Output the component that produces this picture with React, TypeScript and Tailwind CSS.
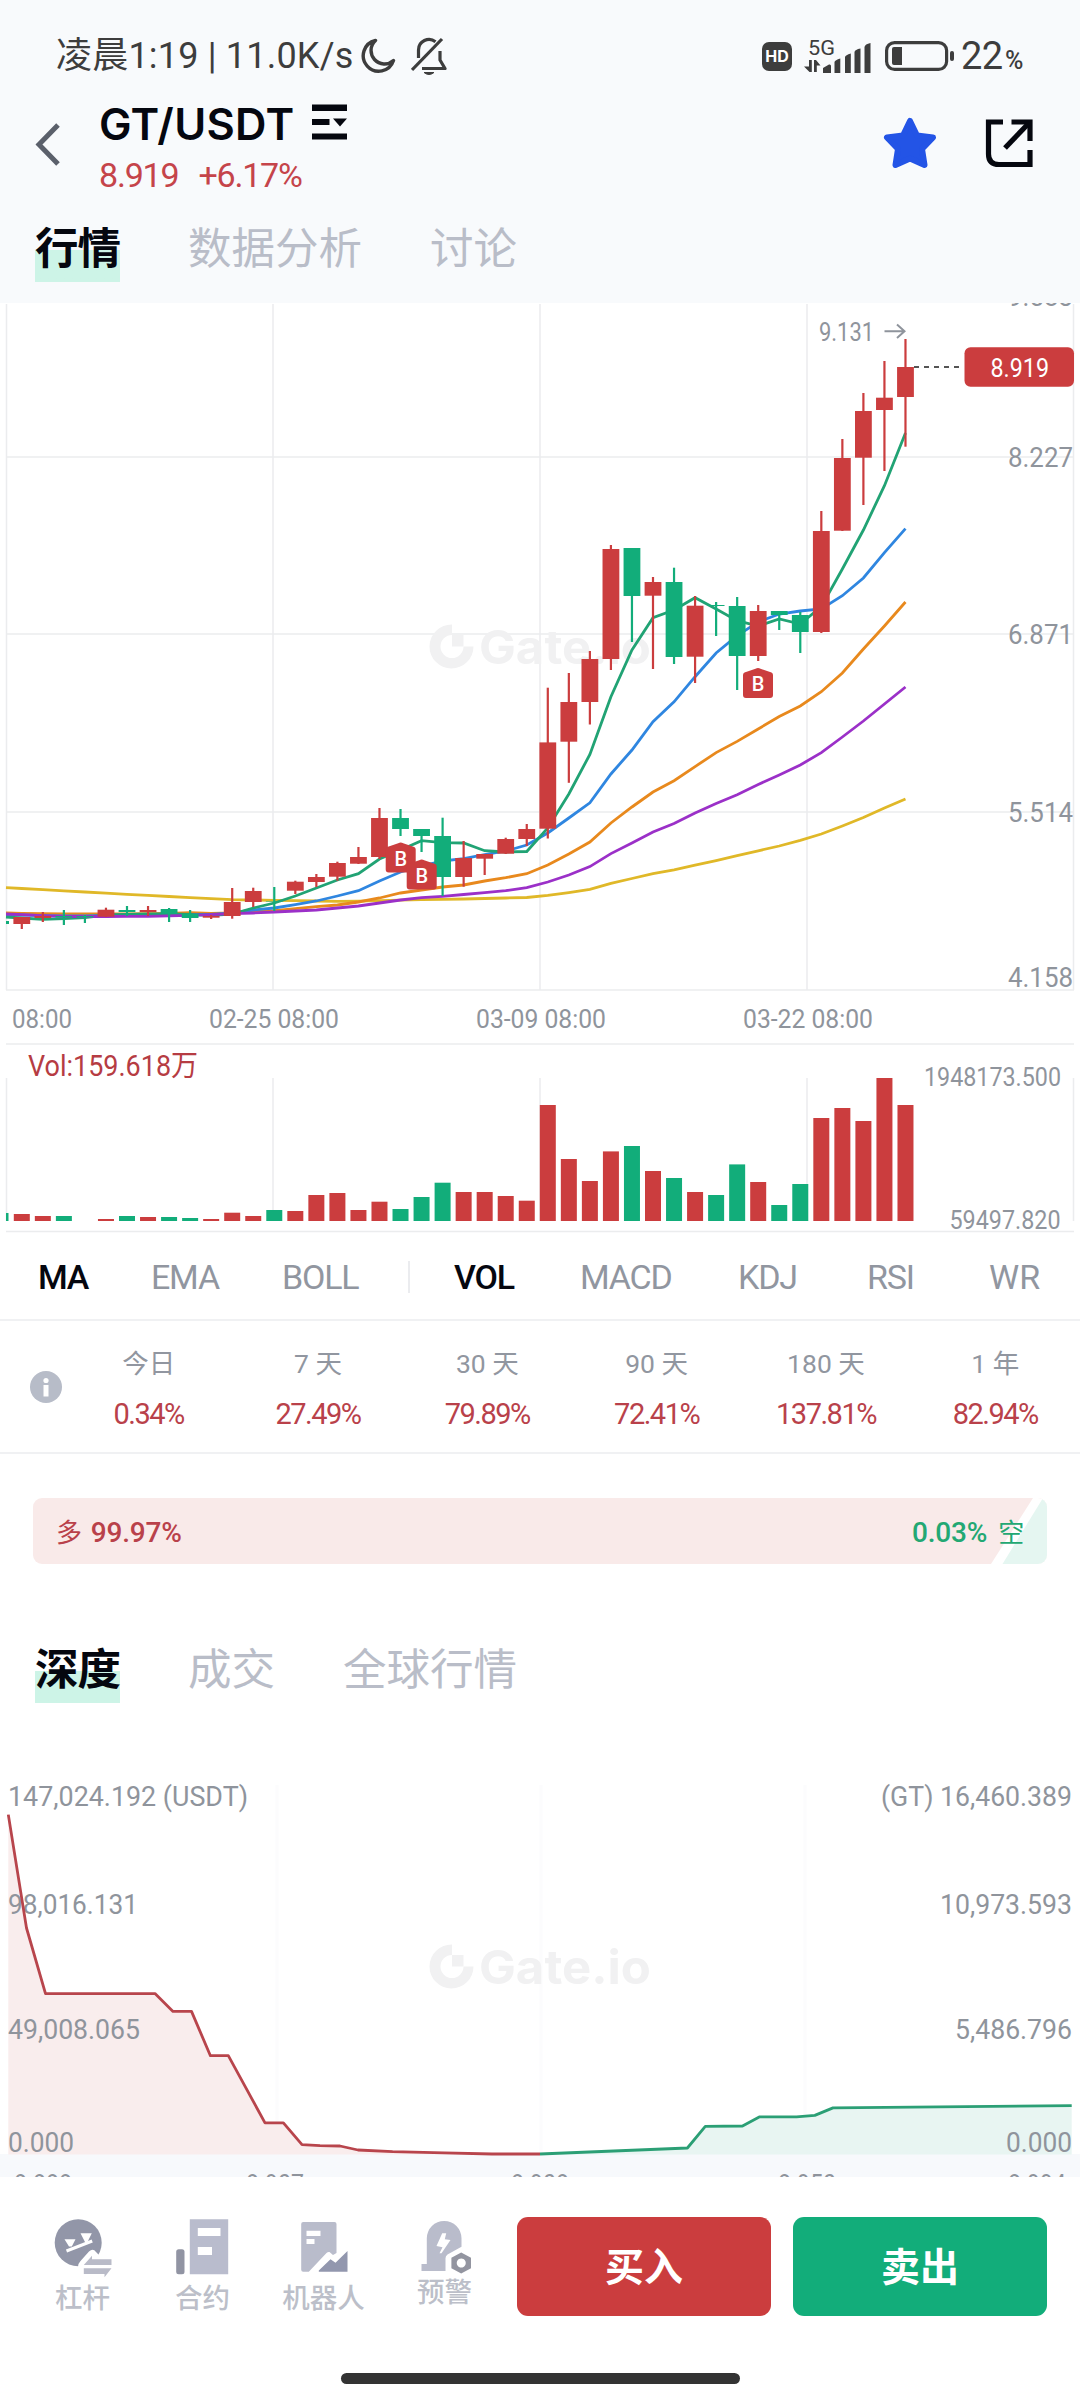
import { useState } from 'react';
import type { ReactNode } from 'react';

const RED = '#cb3d3e';
const GREEN = '#12ad7a';
const LABEL = '#8f949c';

// Candle centers are evenly spaced across the plot
const STEP = 21.04;
const candleX = (i: number) => 21.8 + i * STEP;

type Candle = [up: 0 | 1, high: number, top: number, bottom: number, low: number, vol: number];

// up = 1 is drawn red (rise), 0 is drawn green (fall)
const candles: Candle[] = [
  [1, 917, 917, 924, 929, 1214],
  [1, 912, 916, 918, 922, 1216],
  [0, 910, 916, 917.5, 925, 1216],
  [0, 915, 916, 917.5, 923, 1221],
  [1, 907.7, 909.7, 916.7, 917, 1219],
  [0, 906, 910, 912, 916, 1216],
  [1, 906, 910, 912, 916, 1217],
  [0, 908, 909, 914, 922, 1217],
  [0, 910, 914, 918, 922, 1218],
  [1, 915, 916, 917.7, 919, 1219],
  [1, 888, 902, 916, 918.7, 1212.7],
  [1, 887.7, 891, 902, 907, 1216],
  [0, 887, 901.5, 902, 911, 1210],
  [1, 880.7, 881.7, 890.7, 894, 1211],
  [1, 874, 877, 882, 887, 1195],
  [1, 861.7, 863, 876.7, 880.7, 1193],
  [1, 847, 857, 863.7, 864, 1210],
  [1, 808, 818, 857, 859, 1201.7],
  [0, 809, 818, 829, 836, 1209],
  [0, 829, 829, 836, 852, 1197],
  [0, 817.7, 836, 877, 896, 1182.7],
  [1, 841, 858, 877, 886.7, 1192],
  [1, 854, 854, 858.7, 875, 1192],
  [1, 837.7, 839, 853.7, 854, 1196],
  [1, 824, 829, 839, 846, 1200.7],
  [1, 687.7, 742.4, 828.7, 838.5, 1105],
  [1, 673, 702, 741.7, 782.8, 1159],
  [1, 651, 659, 702, 724.5, 1181],
  [1, 545, 549, 659, 670, 1151.4],
  [0, 548, 548, 596, 642, 1146],
  [1, 577, 582, 595.7, 669, 1171],
  [0, 567.7, 582, 657, 664, 1178],
  [1, 596, 605.7, 656.7, 683, 1192],
  [0, 602, 605, 606, 636, 1195],
  [0, 597, 606, 656, 690, 1164.4],
  [1, 605, 611, 656, 661, 1182],
  [0, 611, 611, 615, 630, 1205],
  [0, 612, 615, 632, 653, 1184],
  [1, 511, 531, 632, 633, 1118],
  [1, 439, 458, 530.7, 531, 1108],
  [1, 393, 411, 457.7, 505, 1121],
  [1, 361, 397.7, 410, 471, 1078],
  [1, 339, 367, 397, 446.7, 1105],
];

// Moving averages, one value per candle
const averages = [
  {
    color: '#e0b828',
    start: 887.7,
    values: [888.5, 889.7, 890.8, 892, 893.2, 894.3, 895.4, 896.5, 897.6, 898.7, 899.7, 900, 900.4, 900.7, 901, 901.3, 901.2, 900.7, 900.2, 899.7, 899.4, 899, 898.5, 898, 897.5, 895.4, 892.6, 889.4, 883.4, 878.5, 873.6, 869.8, 865.2, 860.6, 855.7, 850.8, 846, 840.3, 834, 826, 817.5, 808, 799],
  },
  {
    color: '#e8891d',
    start: 913,
    values: [913.3, 913.6, 914, 914, 914, 914, 913.7, 913.3, 912.7, 913.3, 913, 911.7, 910.7, 908.7, 906.7, 905, 902, 898, 893, 890, 887, 885, 881, 877.7, 873.7, 865, 854, 842, 823, 807, 792, 780.7, 766.6, 752.6, 741.4, 729, 716.5, 706, 691.7, 673, 649, 626, 602],
  },
  {
    color: '#2f86e0',
    start: 914.7,
    values: [915, 915.7, 916, 916, 915.5, 915, 915, 914.8, 914.5, 914.3, 913, 910, 908, 904.7, 901, 896, 890.7, 881, 872, 866, 861, 858.7, 854.7, 851, 845, 833, 818, 802.8, 774, 750, 721.7, 701.8, 676.7, 653, 635.7, 622, 614, 611, 609, 595.7, 578, 552.7, 528.7],
  },
  {
    color: '#21a374',
    start: 917,
    values: [918, 919.3, 918.7, 917.7, 915, 914.5, 914, 914, 914.5, 915.3, 914, 908, 903, 896, 888, 880, 873.7, 859, 850, 840.7, 842.7, 843, 850.7, 852, 851.5, 828, 794, 754.4, 696.7, 650, 617.7, 610, 597.7, 609, 620.7, 626, 619, 624, 606.7, 569, 530, 485.7, 433],
  },
  {
    color: '#9b30c8',
    start: 914,
    values: [914.7, 915.7, 916.3, 916.5, 916.5, 916.4, 916.3, 915.8, 915.3, 914.7, 913.7, 913, 912, 911, 910, 908, 906, 903, 900, 897.7, 896.3, 894.5, 892.7, 890.7, 887.7, 882, 875, 866.6, 853.6, 843, 832, 823.5, 813, 803.5, 794.7, 784.5, 775, 765, 752.6, 737, 721, 704, 687],
  },
];

const marketTabs = ['行情', '数据分析', '讨论'];
const depthTabs = ['深度', '成交', '全球行情'];

const periods = [
  { label: '今日', value: '0.34%' },
  { label: '7 天', value: '27.49%' },
  { label: '30 天', value: '79.89%' },
  { label: '90 天', value: '72.41%' },
  { label: '180 天', value: '137.81%' },
  { label: '1 年', value: '82.94%' },
];

interface ChartTextProps {
  x: number;
  y: number;
  width: number;
  size?: number;
  fill?: string;
  children: string;
}

// Axis text squeezed to the width of the condensed numerals
function ChartText({ x, y, width, size = 28, fill = LABEL, children }: ChartTextProps) {
  return (
    <text x={x} y={y} fontSize={size} fill={fill} textLength={width} lengthAdjust="spacingAndGlyphs">
      {children}
    </text>
  );
}

function Watermark({ y }: { y: number }) {
  return (
    <g transform={`translate(430 ${y})`} fill="#f1f1f2">
      <path d="M22 0.5A22 22 0 1 0 43.500 22.500H33.500A11.500 11.500 0 1 1 22 11Z" />
      <path d="M22 11h11.500v11.500H22z" />
      <text x={49} y={40} fontSize={47} fontWeight={700} fontFamily="Inter, sans-serif" textLength={172} lengthAdjust="spacingAndGlyphs">
        Gate.io
      </text>
    </g>
  );
}

function BuyMark({ x, y }: { x: number; y: number }) {
  return (
    <g transform={`translate(${x} ${y})`}>
      <path d="M-2.500 0.700Q0 -0.600 2.500 0.700L13.500 4.500Q15 5 15 7V27Q15 30 12 30H-12Q-15 30 -15 27V7Q-15 5 -13.500 4.500Z" fill={RED} />
      <text x={0} y={23} fontSize={20} fontWeight={500} fill="#fff" textAnchor="middle">B</text>
    </g>
  );
}

function StatusBar() {
  return (
    <div className="flex h-[96px] shrink-0 items-start justify-between pl-[56px] pr-[55px] pt-[32px] text-[#3d3d3d]">
      <div className="flex h-[48px] items-center">
        <span className="w-[297px] whitespace-pre text-[36px] leading-[48px] tracking-[0.2px]">凌晨1:19 | 11.0K/s</span>
        <svg className="ml-[7px] h-[36px] w-[36px]" viewBox="0 0 36 36" fill="none" stroke="currentColor" strokeWidth="3.400" strokeLinejoin="round">
          <path d="M15.500 2.500A15.500 15.500 0 1 0 33.500 22.500A13 13 0 0 1 15.500 2.500Z" />
        </svg>
        <svg className="ml-[15px] h-[38px] w-[36px]" viewBox="0 0 36 38" fill="none" stroke="currentColor" strokeWidth="3.200" strokeLinejoin="round">
          <path d="M1 33L31 2" />
          <path d="M7.500 21V13A10.500 10.500 0 0 1 24.500 4.700" />
          <path d="M29 14V23L34 31.500H11" />
          <path d="M13 35.500H23Q18 39.500 13 35.500Z" fill="currentColor" strokeWidth="1" />
        </svg>
      </div>

      <div className="flex h-[48px] items-center">
        <div className="flex h-[29px] w-[30px] items-center justify-center rounded-[7px] bg-[#3d3d3d] font-[Inter] text-[16px] font-bold text-white">HD</div>
        <svg className="ml-[12px] h-[36px] w-[68px]" viewBox="0 0 68 36" fill="#3d3d3d">
          <text x="4" y="17" fontSize="20" textLength="27" lengthAdjust="spacingAndGlyphs">5G</text>
          <path d="M5 22h2.800v12H5.500L0 28.500H5zM10 34V22h2L16.500 27.500H12.800V34z" />
          <path d="M19 35V30L25 26.500Q27 26 27 28V35z" />
          <path d="M30.500 35V24Q31 22 36.300 20.500V35z" />
          <path d="M41 35V19Q41.500 17 46.800 15.500V35z" />
          <path d="M50.500 35V14Q51 11.500 56.500 10.500V35z" />
          <path d="M60.500 35V9Q61 6 66.500 5V35z" />
        </svg>
        <svg className="ml-[13px] h-[30px] w-[70px]" viewBox="0 0 70 30">
          <rect x="1.600" y="1.600" width="60" height="26.800" rx="8" fill="none" stroke="#3d3d3d" strokeWidth="3.200" />
          <path d="M9 6h8v18h-8q-2 0-2-2v-14q0-2 2-2z" fill="#3d3d3d" />
          <rect x="65" y="10" width="4" height="10" rx="2" fill="#3d3d3d" />
        </svg>
        <span className="ml-[6px] w-[44px] text-[38px] leading-[48px] tracking-[-0.5px]">22</span>
        <span className="w-[20px] pt-[9px] text-[25px] font-medium tracking-[-1px]">%</span>
      </div>
    </div>
  );
}

function Header() {
  return (
    <header className="flex h-[106px] shrink-0 items-start pl-[35px] pr-[47px]">
      <svg className="mt-[27px] h-[43px] w-[26px]" viewBox="0 0 26 43" fill="none" stroke="#5b606b" strokeWidth="5">
        <path d="M23 2L4 21.500L23 41" />
      </svg>
      <div className="ml-[38px] flex flex-col">
        <div className="flex h-[56px] items-center">
          <h1 className="w-[213px] font-[Inter] text-[43.500px] font-semibold leading-[56px] tracking-[0.300px] text-[#05070f]">GT/USDT</h1>
          <svg className="-mt-[4px] h-[36px] w-[35px]" viewBox="0 0 35 36" fill="#05070f">
            <path d="M0 0.500h35v6.500H0zM0 15h17.500v6H0zM21 14.500h14L28 22.500zM0 29.500h35v6H0z" />
          </svg>
        </div>
        <div className="flex gap-[20px] text-[34px] leading-[46px] tracking-[-1.2px] text-[#c5444a]">
          <span>8.919</span>
          <span>+6.17%</span>
        </div>
      </div>
      <svg className="ml-auto mt-[21px] h-[52px] w-[54px]" viewBox="0 0 54 52" fill="#2354e6" stroke="#2354e6" strokeWidth="6" strokeLinejoin="round">
        <path d="M27 4L34 18.500L50 20.500L39 32L41.500 48L27 41.500L12.500 48L15 32L4 20.500L20 18.500Z" />
      </svg>
      <svg className="ml-[48px] mt-[23px] h-[49px] w-[48px]" viewBox="0 0 48 49" fill="none" stroke="#05070f" strokeWidth="5.200">
        <path d="M18 3H3.500V35Q3.500 45.500 14 45.500H45V31" />
        <path d="M26.500 3H45V22" />
        <path d="M43 5L20 29" />
      </svg>
    </header>
  );
}

interface TabsProps {
  items: string[];
  active: string;
  onSelect: (item: string) => void;
  className: string;
}

function Tabs({ items, active, onSelect, className }: TabsProps) {
  return (
    <nav className={`flex items-start gap-[68px] pl-[35px] text-[43.500px] leading-[64px] ${className}`}>
      {items.map((item) => (
        <button key={item} onClick={() => onSelect(item)} className="flex items-start">
          <span
            className={
              item === active
                ? 'bg-linear-to-t from-[#cdf4e7] from-50% to-transparent to-50% font-bold tracking-[-1px] text-[#05070f]'
                : 'text-[#b9bdc8]'
            }
          >
            {item}
          </span>
        </button>
      ))}
    </nav>
  );
}

function PriceChart() {
  return (
    <svg className="block h-[930px] w-[1080px] shrink-0 bg-white" viewBox="0 303 1080 930">
      {/* Grid */}
      <g stroke="#ebecee" strokeWidth={1.5}>
        {[6.5, 273, 540, 807, 1073.5].map((x) => (
          <path key={x} d={`M${x} 304V990M${x} 1078V1221`} />
        ))}
        {[457, 634, 812, 990, 1044, 1231.5].map((y) => (
          <path key={y} d={`M6 ${y}H1074`} />
        ))}
      </g>

      <Watermark y={624} />

      {/* Moving averages */}
      {averages.map((line) => (
        <polyline
          key={line.color}
          points={[`6,${line.start}`, ...line.values.map((v, i) => `${candleX(i)},${v}`)].join(' ')}
          fill="none"
          stroke={line.color}
          strokeWidth={2.8}
        />
      ))}

      {/* Candles and volume */}
      <rect x={6} y={921} width={3} height={3} fill={GREEN} />
      <rect x={6} y={1213} width={2.5} height={8} fill={GREEN} />
      {candles.map(([up, high, top, bottom, low, vol], i) => {
        const x = candleX(i);
        return (
          <g key={i} fill={up ? RED : GREEN}>
            <rect x={x - 1.1} y={high} width={2.2} height={low - high} />
            <rect x={x - 8.4} y={top} width={16.8} height={bottom - top} />
            <rect x={x - 8} y={vol} width={16} height={1221 - vol} />
          </g>
        );
      })}

      <BuyMark x={400.7} y={842.5} />
      <BuyMark x={421.7} y={859.5} />
      <BuyMark x={758} y={668} />

      {/* High marker and last price */}
      <ChartText x={819} y={340.5} width={55} size={25}>9.131</ChartText>
      <path d="M884.500 331.300H904M897 324.500L904.500 331.300L897 338" fill="none" stroke={LABEL} strokeWidth={2} />
      <path d="M914 367H964" stroke="#555" strokeWidth={1.8} strokeDasharray="5 5" />
      <rect x={964.5} y={347.3} width={109.5} height={39.5} rx={6} fill={RED} />
      <ChartText x={990.5} y={377} width={58.5} size={25} fill="#fff">8.919</ChartText>

      {/* Axis labels */}
      <ChartText x={1008} y={305.5} width={65}>9.583</ChartText>
      <ChartText x={1008} y={467} width={65}>8.227</ChartText>
      <ChartText x={1008} y={644} width={65}>6.871</ChartText>
      <ChartText x={1008} y={821.5} width={65}>5.514</ChartText>
      <ChartText x={1008} y={986.5} width={65}>4.158</ChartText>
      <ChartText x={12} y={1027.5} width={60} size={25}>08:00</ChartText>
      <ChartText x={209} y={1027.5} width={130} size={25}>02-25 08:00</ChartText>
      <ChartText x={476} y={1027.5} width={130} size={25}>03-09 08:00</ChartText>
      <ChartText x={743} y={1027.5} width={130} size={25}>03-22 08:00</ChartText>
      <ChartText x={28} y={1075.5} width={170} size={29} fill="#b63c43">Vol:159.618万</ChartText>
      <ChartText x={924} y={1085.8} width={137} size={25}>1948173.500</ChartText>
      <ChartText x={949.5} y={1228.5} width={111} size={25}>59497.820</ChartText>
    </svg>
  );
}

function IndicatorRow() {
  return (
    <div className="grid h-[88px] shrink-0 grid-cols-[113px_131px_124px_48px_126px_158px_129px_122px_auto] items-center border-b-2 border-[#f0f1f3] pl-[38px] pt-[1px] text-[34px] leading-none tracking-[-1.2px] text-[#9196a0]">
      <span className="font-medium text-[#05070f]">MA</span>
      <span>EMA</span>
      <span>BOLL</span>
      <span className="ml-[2px] h-[32px] w-[2px] bg-[#ebecef]" />
      <span className="font-medium text-[#05070f]">VOL</span>
      <span>MACD</span>
      <span>KDJ</span>
      <span>RSI</span>
      <span className="tracking-normal">WR</span>
    </div>
  );
}

function PeriodRow() {
  return (
    <div className="flex h-[133px] shrink-0 items-center border-b-2 border-[#f0f1f3] pl-[30px]">
      <svg className="h-[32px] w-[32px]" viewBox="0 0 32 32">
        <circle cx="16" cy="16" r="16" fill="#b7bcc8" />
        <circle cx="16" cy="9.500" r="2.600" fill="#fff" />
        <path d="M13.500 14h5v11.500h-5z" fill="#fff" />
      </svg>
      <div className="ml-[2px] grid flex-1 grid-cols-6 pt-[5px] text-center">
        {periods.map((period) => (
          <div key={period.label} className="flex flex-col">
            <span className="text-[26.500px] leading-[36px] text-[#9196a0]">{period.label}</span>
            <span className="mt-[14px] text-[29px] leading-[36px] tracking-[-1.5px] text-[#b9414a]">{period.value}</span>
          </div>
        ))}
      </div>
    </div>
  );
}

function RatioBar() {
  return (
    <div className="relative mx-[33px] mt-[44px] flex h-[66px] shrink-0 items-center justify-between overflow-hidden rounded-[9px] bg-[#f9eae9] px-[23px] pt-[3px] text-[28px] tracking-[-0.200px]">
      <svg className="absolute right-0 top-0 h-[66px] w-[56px]" viewBox="0 0 56 66">
        <path d="M42 0H56V66H0Z" fill="#fff" />
        <path d="M56 0V66H11.500L52 0Z" fill="#e5f6f1" />
      </svg>
      <span className="relative font-medium text-[#b9414a]"><span className="mr-[9px] text-[26px] font-normal">多</span>99.97%</span>
      <span className="relative font-medium text-[#23a873]">0.03%<span className="ml-[11px] text-[26px] font-normal">空</span></span>
    </div>
  );
}

const bidLine = 'M8.300 1814.600L26.500 1928L45.500 1993.600H155L173 2011.400H191.500L210.400 2055.700H228.300L265 2122.900H283.400L302 2144.600L320 2145.700L340 2146L358 2150L392.600 2151.700L444 2152.900L492 2154H540';
const askLine = 'M540 2154L687.400 2148L705.300 2126.400L742.500 2126L759.700 2116.800H796.500L814.800 2115.400L833 2107.900L1071.700 2105.700';

function DepthChart() {
  return (
    <svg className="block h-[397px] w-[1080px] shrink-0" viewBox="0 1780 1080 397">
      <path d="M0 2154H1080V2177H0Z" fill="#f7f9fc" />
      <path d="M277 1785V2154M541 1785V2154M805 1785V2154" stroke="#fcfcfd" strokeWidth={3} />
      <Watermark y={1944} />
      <path d={`${bidLine}V2154.500H8.300Z`} fill="#f9eded" />
      <path d={`${askLine}V2154.500H540Z`} fill="#e8f5f2" />

      <ChartText x={8} y={1805.5} width={240}>147,024.192 (USDT)</ChartText>
      <ChartText x={8} y={1914} width={130}>98,016.131</ChartText>
      <ChartText x={8} y={2039} width={132}>49,008.065</ChartText>
      <ChartText x={8} y={2152} width={66}>0.000</ChartText>
      <ChartText x={881} y={1805.5} width={191}>(GT) 16,460.389</ChartText>
      <ChartText x={940} y={1914} width={132}>10,973.593</ChartText>
      <ChartText x={955} y={2039} width={117}>5,486.796</ChartText>
      <ChartText x={1006} y={2152} width={66}>0.000</ChartText>

      <path d={bidLine} fill="none" stroke="#b8454c" strokeWidth={2.8} strokeLinejoin="round" />
      <path d={askLine} fill="none" stroke="#2b9f75" strokeWidth={2.8} strokeLinejoin="round" />

      {/* Price axis, cut off by the action bar */}
      <ChartText x={14} y={2193} width={58} size={25}>8.888</ChartText>
      <ChartText x={246} y={2193} width={58} size={25}>8.907</ChartText>
      <ChartText x={511} y={2193} width={58} size={25}>8.908</ChartText>
      <ChartText x={778} y={2193} width={58} size={25}>8.950</ChartText>
      <ChartText x={1008} y={2193} width={58} size={25}>8.994</ChartText>
    </svg>
  );
}

function NavItem({ label, className, children }: { label: string; className: string; children: ReactNode }) {
  return (
    <button className={`flex flex-col items-center ${className}`}>
      <svg className="h-[62px] w-[64px] overflow-visible" viewBox="0 0 64 62">
        {children}
      </svg>
      <span className="whitespace-nowrap text-[27.500px] font-medium leading-[40px] text-[#bcbfc9]">{label}</span>
    </button>
  );
}

function ActionBar() {
  return (
    <footer className="flex h-[223px] shrink-0 flex-col bg-white">
      <div className="flex h-[140px] items-start pl-[30px] pr-[33px] pt-[40px]">
        <NavItem label="杠杆" className="w-[105px]">
          <circle cx="27.200" cy="25.700" r="23.500" fill="#9296a8" />
          <path d="M13.500 22.300H24.500L20.800 29.500H18ZM29.500 16.300H40.800L36.500 25H34Z" fill="#fff" />
          <path d="M15.500 34L41.200 24" stroke="#fff" strokeWidth="3" />
          <path d="M27 50Q27 46.500 29.500 44L38 34.500Q42 31 45 35L52 42V50Z" fill="#fff" />
          <path d="M32.800 48L41 38.700V42.300H60.500V48ZM32.800 51.300H60.500L53.500 60.300V57H32.800Z" fill="#b9bbc8" />
        </NavItem>
        <NavItem label="合约" className="ml-[15px] w-[105px]">
          <path d="M18.800 2.300H57.200V57.300H18.800ZM26.800 11V19H49.500V11ZM26.800 30V38H41V30Z" fill="#b9bccd" fillRule="evenodd" />
          <rect x="5.200" y="32.300" width="8.300" height="25" rx="2.500" fill="#9194a3" />
        </NavItem>
        <NavItem label="机器人" className="ml-[16px] w-[105px]">
          <path d="M11.200 5H42.500Q44.500 5 44.500 7V36L41 38L37.500 35Q36 34.500 34.500 36L16.800 54.700H11.200Q9.200 54.700 9.200 52.700V7Q9.200 5 11.200 5ZM14.500 13.700V19H28.500V13.700ZM14.500 22V27H22.500V22Z" fill="#b9bccb" fillRule="evenodd" />
          <path d="M26.800 54.700V53.500L38.500 42.300L43.500 45.700L55.500 34V54.700Z" fill="#9297ae" />
        </NavItem>
        <NavItem label="预警" className="-mt-[6px] ml-[16px] w-[105px]">
          <path d="M8.500 53H13.800V27.300A17.350 17.350 0 0 1 48.500 27.300V35.700L34.500 43.500Q32.500 45 32.500 47.300V60H8.500Z" fill="#b9bccb" />
          <path d="M29.200 22.300H33.200L31.800 28.300L37.500 29L28.500 42.300H26.500L29.500 36.300L23.500 35Z" fill="#fff" />
          <path d="M48.200 41.500L58 46.700V57.300L48.200 62.500L38.400 57.300V46.700ZM48.200 47.500A4.500 4.500 0 1 0 48.300 47.500Z" fill="#9395a0" fillRule="evenodd" />
        </NavItem>
        <button className="ml-auto h-[99px] w-[254px] rounded-[11px] bg-[#cb3d3e] pt-[3px] text-[39px] font-bold text-white">买入</button>
        <button className="ml-[22px] h-[99px] w-[254px] rounded-[11px] bg-[#12ad7a] pt-[3px] text-[39px] font-bold text-white">卖出</button>
      </div>
      <div className="mx-auto mt-[56px] h-[11px] w-[399px] rounded-full bg-[#333333]" />
    </footer>
  );
}

export default function App() {
  const [marketTab, setMarketTab] = useState('行情');
  const [depthTab, setDepthTab] = useState('深度');

  return (
    <div className="flex h-[2400px] w-[1080px] flex-col overflow-hidden bg-white font-[Roboto,'Noto_Sans_CJK_SC',sans-serif]">
      <div className="flex h-[303px] shrink-0 flex-col bg-[#f8fafc]">
        <StatusBar />
        <Header />
        <Tabs items={marketTabs} active={marketTab} onSelect={setMarketTab} className="pt-[16px]" />
      </div>
      <PriceChart />
      <IndicatorRow />
      <PeriodRow />
      <RatioBar />
      <Tabs items={depthTabs} active={depthTab} onSelect={setDepthTab} className="h-[216px] pt-[75px]" />
      <DepthChart />
      <ActionBar />
    </div>
  );
}
